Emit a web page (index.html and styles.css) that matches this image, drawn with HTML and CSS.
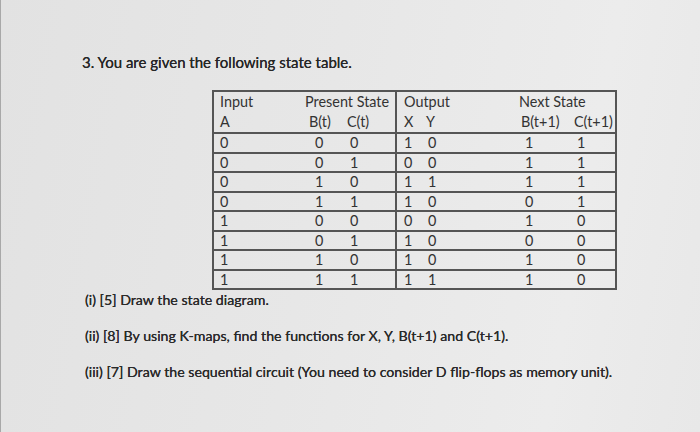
FILE: index.html
```html
<!DOCTYPE html>
<html>
<head>
<meta charset="utf-8">
<link rel="stylesheet" href="styles.css">
</head>
<body>
<div class="page">
  <p class="title">3. You are given the following state table.</p>
  <table class="state">
    <colgroup>
      <col class="c-a"><col class="c-b"><col class="c-c"><col class="c-x"><col class="c-y"><col class="c-bn"><col class="c-cn">
    </colgroup>
    <thead>
      <tr class="h1">
        <th class="pa">Input</th>
        <th colspan="2" class="ps">Present State</th>
        <th colspan="2" class="po sep">Output</th>
        <th colspan="2" class="pn">Next State</th>
      </tr>
      <tr class="h2">
        <th class="pa">A</th>
        <th class="hb">B(t)</th>
        <th class="hc">C(t)</th>
        <th class="hx sep">X</th>
        <th class="hy">Y</th>
        <th class="hbn">B(t+1)</th>
        <th class="hcn">C(t+1)</th>
      </tr>
    </thead>
    <tbody>
      <tr><td class="pa">0</td><td class="db">0</td><td class="dc">0</td><td class="dx sep">1</td><td class="dy">0</td><td class="dbn">1</td><td class="dcn">1</td></tr>
      <tr><td class="pa">0</td><td class="db">0</td><td class="dc">1</td><td class="dx sep">0</td><td class="dy">0</td><td class="dbn">1</td><td class="dcn">1</td></tr>
      <tr><td class="pa">0</td><td class="db">1</td><td class="dc">0</td><td class="dx sep">1</td><td class="dy">1</td><td class="dbn">1</td><td class="dcn">1</td></tr>
      <tr><td class="pa">0</td><td class="db">1</td><td class="dc">1</td><td class="dx sep">1</td><td class="dy">0</td><td class="dbn">0</td><td class="dcn">1</td></tr>
      <tr><td class="pa">1</td><td class="db">0</td><td class="dc">0</td><td class="dx sep">0</td><td class="dy">0</td><td class="dbn">1</td><td class="dcn">0</td></tr>
      <tr><td class="pa">1</td><td class="db">0</td><td class="dc">1</td><td class="dx sep">1</td><td class="dy">0</td><td class="dbn">0</td><td class="dcn">0</td></tr>
      <tr><td class="pa">1</td><td class="db">1</td><td class="dc">0</td><td class="dx sep">1</td><td class="dy">0</td><td class="dbn">1</td><td class="dcn">0</td></tr>
      <tr><td class="pa">1</td><td class="db">1</td><td class="dc">1</td><td class="dx sep">1</td><td class="dy">1</td><td class="dbn">1</td><td class="dcn">0</td></tr>
    </tbody>
  </table>
  <p class="q q1">(i) [5] Draw the state diagram.</p>
  <p class="q">(ii) [8] By using K-maps, find the functions for X, Y, B(t+1) and C(t+1).</p>
  <p class="q">(iii) [7] Draw the sequential circuit (You need to consider D flip-flops as memory unit).</p>
</div>
</body>
</html>
```

FILE: styles.css
```css
html, body {
  margin: 0;
  padding: 0;
}
body {
  width: 700px;
  height: 432px;
  overflow: hidden;
  background: linear-gradient(100deg, #e2e2e2 0%, #e7e7e7 45%, #ececec 80%, #e8e8e8 100%);
  font-family: Lato, "Open Sans", sans-serif;
  color: #2a2a2a;
}
.page {
  padding: 52px 0 0 81px;
  border-left: 1px solid #a8a8a8;
  height: 432px;
  box-sizing: border-box;
}
.title {
  margin: 0;
  font-size: 15px;
  line-height: 20px;
  color: #262626;
  text-shadow: 0 0 0.4px #262626;
}
.state {
  margin: 18px 0 0 130px;
  border-collapse: collapse;
  table-layout: fixed;
  border: 2px solid #555;
  font-size: 14.4px;
  color: #333;
}
.c-a { width: 88px; }
.c-b { width: 38px; }
.c-c { width: 57px; }
.c-x { width: 25px; }
.c-y { width: 40px; }
.c-bn { width: 105px; }
.c-cn { width: 50px; }
.state th, .state td {
  padding: 0;
  text-align: left;
  font-weight: normal;
  white-space: nowrap;
}
.state th {
  height: 20px;
  line-height: 20px;
}
.state thead tr.h2 th {
  border-bottom: 2px solid #555;
}
.state td {
  height: 17.5px;
  line-height: 17px;
  border-bottom: 2px solid #555;
}
.sep {
  border-left: 2px solid #555;
}
.pa { padding-left: 6px !important; }
.ps { padding-left: 4px !important; }
.po { padding-left: 7px !important; }
.pn { padding-left: 58px !important; }
.hb { padding-left: 8px !important; }
.hc { padding-left: 8px !important; }
.hx { padding-left: 7px !important; }
.hy { padding-left: 5px !important; }
.hbn { padding-left: 60px !important; }
.hcn { padding-left: 8px !important; }
.db { padding-left: 14px !important; }
.dc { padding-left: 11px !important; }
.dx { padding-left: 7px !important; }
.dy { padding-left: 7px !important; }
.dbn { padding-left: 64px !important; }
.dcn { padding-left: 11px !important; }
.q {
  margin: 16px 0 0 3px;
  font-size: 14.2px;
  line-height: 20px;
  color: #2a2a2a;
  text-shadow: 0 0 0.3px #2a2a2a;
}
.q1 {
  margin-top: 0;
}
```
